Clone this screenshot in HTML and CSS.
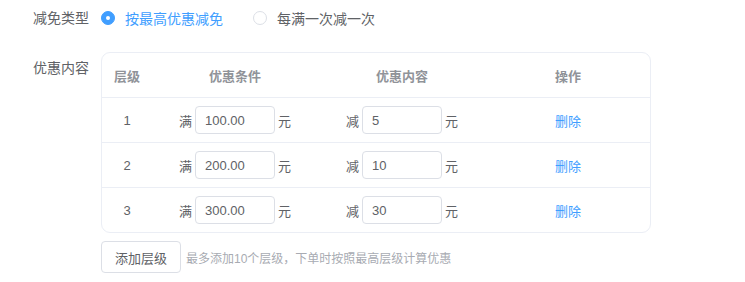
FILE: index.html
```html
<!DOCTYPE html>
<html lang="zh-CN">
<head>
  <meta charset="UTF-8" />
  <title>满减设置</title>
  <link rel="stylesheet" href="styles.css">
</head>
<body>
  <div class="form">
    <div class="form-item">
      <label class="form-label">减免类型</label>
      <div class="form-content radios">
        <label class="radio checked"><span class="radio-dot"></span>按最高优惠减免</label>
        <label class="radio"><span class="radio-dot"></span>每满一次减一次</label>
      </div>
    </div>

    <div class="form-item">
      <label class="form-label tall">优惠内容</label>
      <div class="form-content">
        <div class="tier-table">
          <div class="tier-row head">
            <div class="cell">层级</div>
            <div class="cell">优惠条件</div>
            <div class="cell">优惠内容</div>
            <div class="cell">操作</div>
          </div>
          <div class="tier-row">
            <div class="cell">1</div>
            <div class="cell">满<input class="input" value="100.00">元</div>
            <div class="cell">减<input class="input" value="5">元</div>
            <div class="cell"><a class="link">删除</a></div>
          </div>
          <div class="tier-row">
            <div class="cell">2</div>
            <div class="cell">满<input class="input" value="200.00">元</div>
            <div class="cell">减<input class="input" value="10">元</div>
            <div class="cell"><a class="link">删除</a></div>
          </div>
          <div class="tier-row">
            <div class="cell">3</div>
            <div class="cell">满<input class="input" value="300.00">元</div>
            <div class="cell">减<input class="input" value="30">元</div>
            <div class="cell"><a class="link">删除</a></div>
          </div>
        </div>
        <div class="add-bar">
          <button class="btn">添加层级</button>
          <span class="hint">最多添加10个层级，下单时按照最高层级计算优惠</span>
        </div>
      </div>
    </div>
  </div>
</body>
</html>
```

FILE: styles.css
```css
html, body {
  margin: 0;
  padding: 0;
  background: #fff;
  font-family: "Liberation Sans", "Noto Sans CJK SC", sans-serif;
  color: #606266;
}

.form-item {
  display: flex;
  margin-bottom: 16px;
}

.form-label {
  width: 89px;
  padding-right: 12px;
  text-align: right;
  font-size: 14px;
  line-height: 36px;
  flex-shrink: 0;
}

.form-label.tall {
  line-height: 32px;
}

.radios {
  display: flex;
  align-items: center;
  height: 36px;
}

.radio {
  display: flex;
  align-items: center;
  font-size: 14px;
  margin-right: 30px;
  color: #606266;
}

.radio-dot {
  width: 12px;
  height: 12px;
  border: 1px solid #dcdfe6;
  border-radius: 50%;
  margin-right: 10px;
  box-sizing: content-box;
  position: relative;
}

.radio.checked {
  color: #409eff;
}

.radio.checked .radio-dot {
  background: #409eff;
  border-color: #409eff;
}

.radio.checked .radio-dot::after {
  content: "";
  position: absolute;
  left: 4px;
  top: 4px;
  width: 4px;
  height: 4px;
  border-radius: 50%;
  background: #fff;
}

.tier-table {
  width: 548px;
  border: 1px solid #ebeef5;
  border-radius: 9px;
  font-size: 13px;
}

.tier-row {
  display: grid;
  grid-template-columns: 50px 166px 168px 1fr;
  height: 45px;
  border-top: 1px solid #ebeef5;
  box-sizing: border-box;
}

.tier-row.head {
  border-top: none;
  height: 44px;
  color: #909399;
  font-weight: bold;
}

.cell {
  display: flex;
  align-items: center;
  justify-content: center;
}

.input {
  width: 80px;
  height: 28px;
  box-sizing: border-box;
  margin: 0 3px;
  padding: 0 9px;
  border: 1px solid #dcdfe6;
  border-radius: 4px;
  font-family: inherit;
  font-size: 13px;
  color: #606266;
  outline: none;
}

.link {
  color: #409eff;
  cursor: pointer;
}

.add-bar {
  display: flex;
  align-items: center;
  margin-top: 8px;
}

.btn {
  width: 80px;
  height: 32px;
  border: 1px solid #dcdfe6;
  border-radius: 4px;
  background: #fff;
  color: #606266;
  font-family: inherit;
  font-size: 13px;
  margin-right: 5px;
  padding: 0;
}

.hint {
  font-size: 12px;
  color: #a8abb2;
}
```
